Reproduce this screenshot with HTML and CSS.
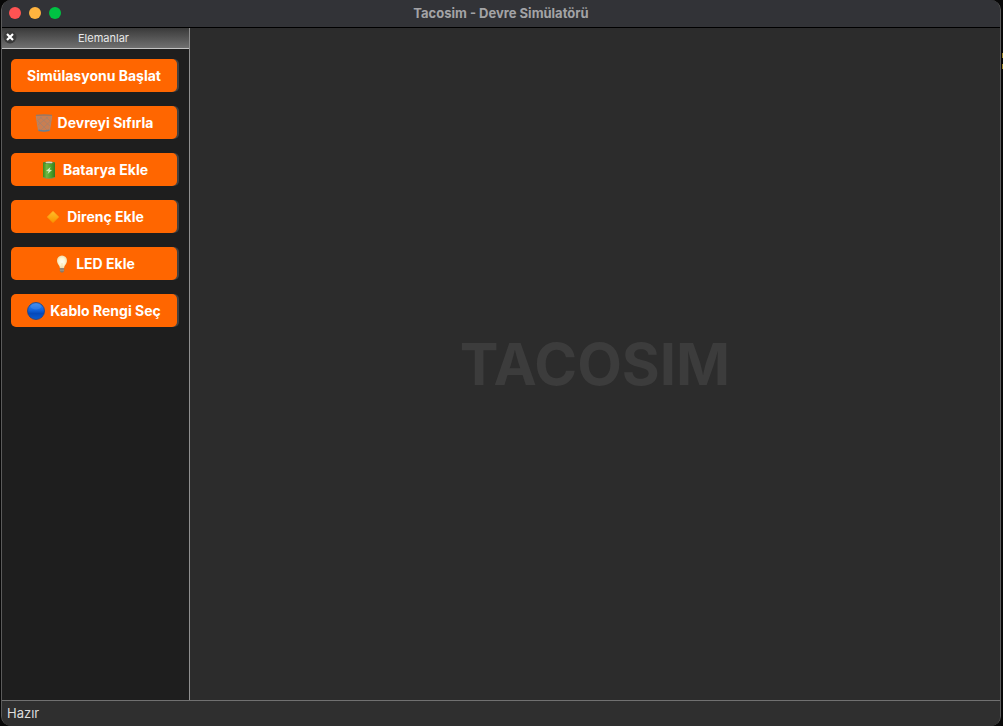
FILE: index.html
```html
<!DOCTYPE html>
<html lang="tr">
<head>
<meta charset="utf-8">
<title>Tacosim - Devre Simülatörü</title>
<link rel="stylesheet" href="styles.css">
</head>
<body>
<div class="window">
  <header class="titlebar">
    <div class="lights">
      <button class="light red" aria-label="Kapat"></button>
      <button class="light amber" aria-label="Küçült"></button>
      <button class="light green" aria-label="Büyüt"></button>
    </div>
    <h1 class="title">Tacosim - Devre Simülatörü</h1>
  </header>
  <div class="body">
    <aside class="dock">
      <div class="dock-head">
        <button class="dock-close" aria-label="Paneli kapat">
          <svg width="14" height="14" viewBox="0 0 14 14"><circle cx="7" cy="7" r="6.500" fill="#3b3b3b"/><path d="M4 4l6 6M10 4l-6 6" stroke="#fff" stroke-width="2.200"/></svg>
        </button>
        <h2 class="dock-title">Elemanlar</h2>
      </div>
      <div class="tools">
        <button class="tool">Simülasyonu Başlat</button>
        <button class="tool">
          <svg class="icon" viewBox="0 0 18 18"><path d="M1 1.500L3.500 16.500q5.500 1.500 11 0L17 1.500z" fill="#c97e52"/><path d="M2 6l10 10M5 3l10 9M11 3l5 5M15.500 7L6 16M13 3L3 11M7 3L2 7" stroke="#9a8272" stroke-width=".6" fill="none"/><path d="M1.200 2L3.500 16.500M16.800 2L14.500 16.500" stroke="#a78a78" stroke-width=".8" fill="none"/><path d="M1 1.400q8-.8 16 0" stroke="#94796a" stroke-width="1.400" fill="none"/><path d="M3.500 16.300q5.500 1.500 11 0" stroke="#687f92" stroke-width="1.600" fill="none"/></svg>
          Devreyi Sıfırla</button>
        <button class="tool">
          <svg class="icon" viewBox="0 0 18 18"><defs><linearGradient id="cell"><stop offset="0" stop-color="#3b8a1c"/><stop offset=".3" stop-color="#6db843"/><stop offset=".65" stop-color="#4ba32b"/><stop offset="1" stop-color="#347a1e"/></linearGradient></defs><path d="M3 1.500h12v15q-6 2-12 0z" fill="url(#cell)"/><ellipse cx="9" cy="1.800" rx="6" ry="1.300" fill="#4f8734"/><ellipse cx="9" cy="1.400" rx="3.500" ry=".9" fill="#d1d7c8"/><path d="M3 16q6 2.200 12 0v.8q-6 2-12 0z" fill="#8e8a54"/><path d="M10.500 6L6 10l2.600.2-1 2.800L12 9l-2.400-.2z" fill="#d2edbf"/></svg>
          Batarya Ekle</button>
        <button class="tool">
          <svg class="icon" viewBox="0 0 18 18"><defs><linearGradient id="gem" x2="0" y2="1"><stop offset="0" stop-color="#ffbd28"/><stop offset="1" stop-color="#f99500"/></linearGradient></defs><path d="M9 3.500L14.500 9 9 14.500 3.500 9z" fill="url(#gem)" stroke="url(#gem)" stroke-linejoin="round"/></svg>
          Direnç Ekle</button>
        <button class="tool">
          <svg class="icon" viewBox="0 0 18 18"><defs><radialGradient id="glow"><stop offset="0" stop-color="#fffdf0"/><stop offset=".6" stop-color="#fff5d2"/><stop offset="1" stop-color="#f0dcae"/></radialGradient></defs><path d="M9 .500a5 5 0 0 0-5 5.300c0 3.200 2.600 4.400 2.900 7.200h4.200c.3-2.800 2.900-4 2.900-7.200A5 5 0 0 0 9 .500z" fill="url(#glow)"/><path d="M9 12.500V8" stroke="#f0dca0" stroke-width=".7"/><path d="M6.800 13h4.400v3L10 17.500H8L6.800 16z" fill="#87796a"/><path d="M7 14h4M7 15.600h4" stroke="#a69c8d" stroke-width=".7"/></svg>
          LED Ekle</button>
        <button class="tool">
          <svg class="icon" viewBox="0 0 18 18"><defs><linearGradient id="ball" x2="0" y2="1"><stop offset="0" stop-color="#3c86e6"/><stop offset=".45" stop-color="#1263dc"/><stop offset=".65" stop-color="#0649ba"/><stop offset="1" stop-color="#0b5bd0"/></linearGradient></defs><circle cx="9" cy="9" r="8.500" fill="url(#ball)" stroke="#17438c" stroke-width=".8"/><ellipse cx="9" cy="4.500" rx="5.500" ry="3" fill="#83bcff" opacity=".2"/></svg>
          Kablo Rengi Seç</button>
      </div>
    </aside>
    <main class="canvas"><span class="watermark">TACOSIM</span></main>
  </div>
  <footer class="status">Hazır</footer>
</div>
<div class="desktop-edge"><i class="mark"></i><i class="mark"></i></div>
</body>
</html>
```
FILE: styles.css
```css
* { box-sizing: border-box; }

body {
  display: flex;
  height: 100vh;
  margin: 0;
  padding-left: 1px;
  background: #080808;
  font-family: Inter, "Liberation Sans", sans-serif;
}

button { padding: 0; border: 0; font: inherit; }

.window {
  display: flex;
  flex: 1;
  flex-direction: column;
  overflow: hidden;
  border: solid #5b5b5b;
  border-width: 0 1px;
  border-radius: 10px;
  background: #2c2c2c;
}

.titlebar {
  display: grid;
  grid-template-columns: 1fr auto 1fr;
  align-items: center;
  height: 28px;
  padding: 0 7px 1px;
  border-bottom: 1px solid #000;
  background: #323337;
}

.lights { display: flex; gap: 8px; }
.light { width: 12px; height: 12px; border-radius: 50%; }
.red { background: #ff5353; }
.amber { background: #ffb43f; }
.green { background: #00c243; }

.title {
  margin: 0;
  color: #a3a3a6;
  font-size: 13px;
  font-weight: 700;
  line-height: 16px;
}

.body { display: flex; flex: 1; }

.dock {
  width: 188px;
  border-right: 1px solid #8f8f8f;
  background: #1e1e1e;
}

.dock-head {
  display: grid;
  grid-template-columns: 16px 1fr;
  align-items: center;
  height: 21px;
  padding: 0 1px;
  border-bottom: 1px solid #c2c2c2;
  background: linear-gradient(#3a3a3a, #707070);
}

.dock-close {
  display: flex;
  align-self: start;
  margin-top: 2px;
  background: none;
}

.dock-title {
  margin: 0;
  color: #e8e8e8;
  font-size: 11px;
  font-weight: 400;
  text-align: center;
}

.tools {
  display: flex;
  flex-direction: column;
  gap: 14px;
  padding: 10px 12px 10px 9px;
}

.tool {
  display: flex;
  align-items: center;
  justify-content: center;
  gap: 5px;
  height: 33px;
  border-radius: 5px;
  background: #ff6600;
  box-shadow: 2px 0 0 #414141;
  color: #fff;
  font-size: 14px;
  font-weight: 700;
  white-space: nowrap;
}

.icon { width: 18px; height: 18px; }

.canvas {
  display: flex;
  flex: 1;
  align-items: center;
  justify-content: center;
  background: #2c2c2c;
}

.watermark {
  color: #3c3c3c;
  font-size: 58px;
  font-weight: 700;
}

.status {
  height: 26px;
  padding: 0 5px;
  border-top: 1px solid #717171;
  background: #2f2f2f;
  color: #dedede;
  font-size: 13px;
  line-height: 25px;
}

.desktop-edge {
  display: flex;
  flex-direction: column;
  gap: 6px;
  align-items: flex-end;
  width: 2px;
  padding-top: 53px;
}

.mark { width: 1px; height: 5px; background: #9b8428; }
```
